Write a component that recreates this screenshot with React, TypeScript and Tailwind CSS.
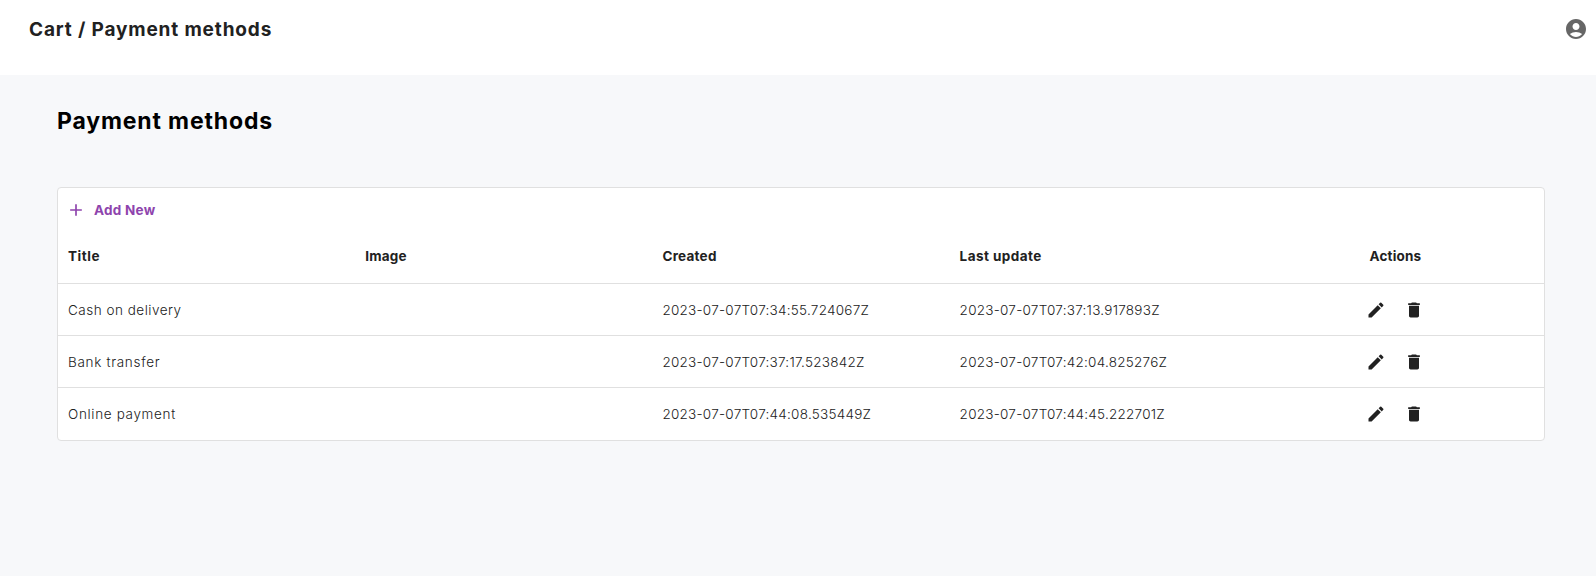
import { MdAccountCircle, MdAdd, MdDelete, MdEdit } from "react-icons/md";

type PaymentMethod = {
  title: string;
  tracking: string;
  created: string;
  updated: string;
};

const methods: PaymentMethod[] = [
  {
    title: "Cash on delivery",
    tracking: "tracking-[0.5px]",
    created: "2023-07-07T07:34:55.724067Z",
    updated: "2023-07-07T07:37:13.917893Z",
  },
  {
    title: "Bank transfer",
    tracking: "tracking-[0.69px]",
    created: "2023-07-07T07:37:17.523842Z",
    updated: "2023-07-07T07:42:04.825276Z",
  },
  {
    title: "Online payment",
    tracking: "tracking-[0.66px]",
    created: "2023-07-07T07:44:08.535449Z",
    updated: "2023-07-07T07:44:45.222701Z",
  },
];

function TopBar() {
  return (
    <header className="flex h-[75px] items-start justify-between bg-white pl-[29px] pr-2">
      <h1 className="mt-4 text-[19px] leading-7 font-bold tracking-[0.85px] text-[#212121]">
        Cart / Payment methods
      </h1>
      <button aria-label="Account" className="mt-[17px] text-[#666666]">
        <MdAccountCircle size={24} />
      </button>
    </header>
  );
}

function HeaderRow() {
  return (
    <div className="grid h-14 grid-cols-5 items-center border-b border-[#e0e0e0] pt-0.5 text-[13.5px] font-bold text-[#212121]">
      <div className="pl-[10px] tracking-[0.55px]">Title</div>
      <div className="pl-[10px] tracking-[0.2px]">Image</div>
      <div className="pl-[10px] tracking-[0.25px]">Created</div>
      <div className="pl-[10px] tracking-[0.45px]">Last update</div>
      <div className="text-center tracking-[0.2px]">Actions</div>
    </div>
  );
}

function Row({ method }: { method: PaymentMethod }) {
  return (
    <div className="grid h-[52px] grid-cols-5 items-center border-b border-[#e0e0e0] text-[13.5px] font-light text-[#212121] last:border-transparent">
      <div className={`pt-0.5 pl-[10px] ${method.tracking}`}>{method.title}</div>
      <div />
      <div className="pt-0.5 pl-[10px] tracking-[0.25px]">{method.created}</div>
      <div className="pt-0.5 pl-[10px] tracking-[0.25px]">{method.updated}</div>
      <div className="flex justify-center gap-[18px]">
        <button aria-label="Edit">
          <MdEdit size={20} />
        </button>
        <button aria-label="Delete">
          <MdDelete size={20} />
        </button>
      </div>
    </div>
  );
}

export default function App() {
  return (
    <div className="min-h-screen bg-[#f7f8fa] font-['Inter',sans-serif]">
      <TopBar />
      <main className="pt-7 pr-[51px] pl-[57px]">
        <h2 className="text-[23px] leading-9 font-bold tracking-[0.85px] text-black">
          Payment methods
        </h2>
        <section className="mt-12 rounded border border-[#e0e0e0] bg-white">
          <div className="flex h-10 items-center pt-1 pl-2">
            <button className="flex items-center gap-2 text-[13.5px] font-bold tracking-[0.25px] text-[#8e44ad]">
              <MdAdd size={20} />
              Add New
            </button>
          </div>
          <HeaderRow />
          {methods.map((method) => (
            <Row key={method.title} method={method} />
          ))}
        </section>
      </main>
    </div>
  );
}
